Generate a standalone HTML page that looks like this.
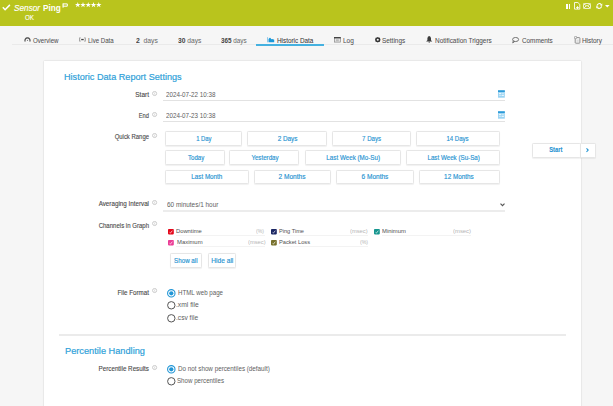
<!DOCTYPE html>
<html><head><meta charset="utf-8"><style>
*{box-sizing:border-box;margin:0;padding:0}
html,body{width:613px;height:406px;overflow:hidden;background:#f6f6f6;font-family:"Liberation Sans",sans-serif}
.a{position:absolute;white-space:nowrap;line-height:1}
#hdr{position:absolute;left:0;top:0;width:613px;height:26px;background:#b9c41d}
.tab{color:#505050;-webkit-text-stroke:0.05px #505050}
.tab b{-webkit-text-stroke:0;color:#444}
.dy{color:#666;-webkit-text-stroke:0}
#tabline{position:absolute;left:12px;top:44px;width:601px;height:1px;background:#eaeaea}
#tabul{position:absolute;left:256px;top:44px;width:68px;height:2px;background:#45b1e0}
#panel{position:absolute;left:44px;top:61px;width:537px;height:360px;background:#fff;box-shadow:0 0 1.5px rgba(0,0,0,.2)}
.h{color:#2e9fd9;-webkit-text-stroke:0.2px #2e9fd9}
.lbl{color:#4a4a4a;-webkit-text-stroke:0.12px #4a4a4a}
.val{color:#5e5e5e}
.ul{position:absolute;height:1px;background:#e2e2e2}
.btn{position:absolute;background:#fff;border:1px solid #e6e6e6;border-radius:1.5px;box-shadow:0 0.5px 1px rgba(0,0,0,.06)}
.bt{color:#1f93d2;-webkit-text-stroke:0.15px #1f93d2;white-space:nowrap;line-height:1}
.ch{color:#505050}
.unit{color:#b4b4b4}
</style></head><body>
<div id="hdr"></div>
<svg class="a" style="left:2.1px;top:3.5px" width="9" height="7" viewBox="0 0 9 7"><path d="M0.8 3.3 L3.1 5.7 L7.9 0.9" fill="none" stroke="#fff" stroke-width="1.5"/></svg>
<div id="t_sensor" class="a " style="left:14.15px;top:3.15px;font-size:9.6px;transform:scaleX(0.8579);transform-origin:0 0;font-style:italic;color:#fff;-webkit-text-stroke:0.15px #fff">Sensor</div>
<div id="t_ping" class="a " style="left:42.84px;top:3.65px;font-size:9.0px;transform:scaleX(0.9089);transform-origin:0 0;font-weight:bold;color:#fff">Ping</div>
<svg class="a" style="left:62.3px;top:2.6px" width="7" height="6" viewBox="0 0 7 6"><rect x="0.5" y="0.4" width="1.2" height="4.2" fill="#fff"/><path d="M1.2 0.9 H5.3 V3.2 H1.2" fill="none" stroke="#fff" stroke-width="1"/></svg>
<svg class="a" style="left:74.6px;top:2px" width="27" height="6" viewBox="0 0 27 6"><path transform="translate(0.0,0)" d="M2.75 0 L3.4 2 L5.5 2 L3.85 3.2 L4.5 5.2 L2.75 3.95 L1 5.2 L1.65 3.2 L0 2 L2.1 2 Z" fill="#fff"/><path transform="translate(5.25,0)" d="M2.75 0 L3.4 2 L5.5 2 L3.85 3.2 L4.5 5.2 L2.75 3.95 L1 5.2 L1.65 3.2 L0 2 L2.1 2 Z" fill="#fff"/><path transform="translate(10.5,0)" d="M2.75 0 L3.4 2 L5.5 2 L3.85 3.2 L4.5 5.2 L2.75 3.95 L1 5.2 L1.65 3.2 L0 2 L2.1 2 Z" fill="#fff"/><path transform="translate(15.75,0)" d="M2.75 0 L3.4 2 L5.5 2 L3.85 3.2 L4.5 5.2 L2.75 3.95 L1 5.2 L1.65 3.2 L0 2 L2.1 2 Z" fill="#fff"/><path transform="translate(21.0,0)" d="M2.75 0 L3.4 2 L5.5 2 L3.85 3.2 L4.5 5.2 L2.75 3.95 L1 5.2 L1.65 3.2 L0 2 L2.1 2 Z" fill="#fff"/></svg>
<div id="t_ok" class="a " style="left:24.63px;top:15.20px;font-size:6.7px;transform:scaleX(0.9289);transform-origin:0 0;color:#fff;-webkit-text-stroke:0.1px #fff">OK</div>
<div class="a" style="left:566.2px;top:3.9px;width:1.4px;height:4.7px;background:#fff"></div>
<div class="a" style="left:568.8px;top:3.9px;width:1.4px;height:4.7px;background:#fff"></div>
<svg class="a" style="left:573.8px;top:2.4px" width="7" height="8" viewBox="0 0 7 8"><path d="M0.5 0.5 H3.9 L5.8 2.4 V7.1 H0.5 Z" fill="none" stroke="#fff" stroke-width="0.85"/><path d="M3.5 4.3 V6.9 M2.2 5.6 H4.8" stroke="#fff" stroke-width="1"/></svg>
<svg class="a" style="left:583.2px;top:3.4px" width="8" height="6" viewBox="0 0 8 6"><rect x="0.45" y="0.45" width="7.1" height="5.1" rx="0.9" fill="none" stroke="#fff" stroke-width="0.8"/><path d="M0.7 0.9 L4 3.1 L7.3 0.9 M0.7 5.1 L3 3.2 M7.3 5.1 L5 3.2" fill="none" stroke="#fff" stroke-width="0.85"/></svg>
<svg class="a" style="left:595.9px;top:3px" width="7" height="6" viewBox="0 0 7 6"><path d="M1.0 2.7 A2.3 2.3 0 0 1 5.2 1.6 M5.5 3.3 A2.3 2.3 0 0 1 1.3 4.4" fill="none" stroke="#fff" stroke-width="1.1"/><path d="M6.3 0.6 L6.2 2.9 L4.0 2.2 Z M0.2 5.4 L0.3 3.1 L2.5 3.8 Z" fill="#fff"/></svg>
<svg class="a" style="left:604.8px;top:5px" width="5" height="3" viewBox="0 0 5 3"><path d="M0 0 H4.6 L2.3 2.4 Z" fill="#fff"/></svg>
<div id="tabline"></div><div id="tabul"></div>
<div id="tb_ov" class="a tab" style="left:32.85px;top:37.90px;font-size:6.8px;transform:scaleX(0.9021);transform-origin:0 0;">Overview</div>
<div id="tb_ld" class="a tab" style="left:87.95px;top:37.90px;font-size:6.8px;transform:scaleX(0.8927);transform-origin:0 0;">Live Data</div>
<div id="tb_2" class="a tab" style="left:136.27px;top:37.90px;font-size:6.8px;transform:scaleX(0.9966);transform-origin:0 0;"><b>2</b>&nbsp;&nbsp;<span class="dy">days</span></div>
<div id="tb_30" class="a tab" style="left:177.78px;top:37.90px;font-size:6.8px;transform:scaleX(0.9803);transform-origin:0 0;"><b>30</b> <span class="dy">days</span></div>
<div id="tb_365" class="a tab" style="left:221.16px;top:37.90px;font-size:6.8px;transform:scaleX(0.9312);transform-origin:0 0;"><b>365</b> <span class="dy">days</span></div>
<div id="tb_hd" class="a tab" style="left:277.45px;top:37.90px;font-size:6.8px;transform:scaleX(0.9339);transform-origin:0 0;color:#383838;-webkit-text-stroke:0.05px #383838">Historic Data</div>
<div id="tb_log" class="a tab" style="left:343.28px;top:37.90px;font-size:6.8px;transform:scaleX(0.9552);transform-origin:0 0;">Log</div>
<div id="tb_set" class="a tab" style="left:382.18px;top:37.90px;font-size:6.8px;transform:scaleX(0.9433);transform-origin:0 0;">Settings</div>
<div id="tb_nt" class="a tab" style="left:435.48px;top:37.90px;font-size:6.8px;transform:scaleX(0.9452);transform-origin:0 0;">Notification Triggers</div>
<div id="tb_com" class="a tab" style="left:522.25px;top:37.90px;font-size:6.8px;transform:scaleX(0.9322);transform-origin:0 0;">Comments</div>
<div id="tb_his" class="a tab" style="left:582.40px;top:37.90px;font-size:6.8px;transform:scaleX(0.9415);transform-origin:0 0;">History</div>
<svg class="a" style="left:23.5px;top:36.8px" width="7" height="6" viewBox="0 0 7 6"><path d="M1.3 4.6 A2.5 2.5 0 1 1 5.7 4.6" fill="none" stroke="#444" stroke-width="1.1"/><circle cx="3.5" cy="3.4" r="0.6" fill="#888"/></svg>
<svg class="a" style="left:78.5px;top:36.8px" width="7" height="6" viewBox="0 0 7 6"><path d="M1 0.3 Q0.1 2.5 1 4.7 M5.9 0.3 Q6.8 2.5 5.9 4.7" fill="none" stroke="#888" stroke-width="1"/><rect x="2.2" y="1.9" width="2.5" height="1.3" fill="#444"/></svg>
<svg class="a" style="left:266.8px;top:36.6px" width="8" height="6" viewBox="0 0 8 6"><path d="M0.55 0.2 V5.3" fill="none" stroke="#5ab0e4" stroke-width="0.7"/><path d="M1.5 5.3 V2.2 Q2.2 0.5 3.1 0.7 Q3.8 0.9 4.2 2.2 Q5.6 1.8 7.2 2.8 V5.3 Z" fill="#1b98d9"/></svg>
<svg class="a" style="left:334.2px;top:36.6px" width="7" height="6" viewBox="0 0 7 6"><rect x="0.35" y="0.5" width="6" height="4.6" fill="#e4e4e4" stroke="#888" stroke-width="0.7"/><rect x="0" y="0.1" width="6.7" height="1.3" fill="#3a3a3a"/><rect x="2" y="2.3" width="2.8" height="2" fill="#bbb"/></svg>
<svg class="a" style="left:374.6px;top:36.5px" width="6" height="6" viewBox="0 0 6 6"><path d="M2.75 0 L3.6 0.6 L4.9 0.8 L5.2 2 L5.5 2.75 L5.2 3.5 L4.9 4.7 L3.6 4.9 L2.75 5.5 L1.9 4.9 L0.6 4.7 L0.3 3.5 L0 2.75 L0.3 2 L0.6 0.8 L1.9 0.6 Z" fill="#333"/><circle cx="2.75" cy="2.75" r="1.05" fill="#f6f6f6"/></svg>
<svg class="a" style="left:426.3px;top:36px" width="7" height="7" viewBox="0 0 7 7"><path d="M3.2 0 Q4.8 0.3 5 2.2 V4.2 L6.3 5.6 H0.1 L1.4 4.2 V2.2 Q1.6 0.3 3.2 0 Z" fill="#3a3a3a"/><circle cx="3.2" cy="6.1" r="0.7" fill="#3a3a3a"/></svg>
<svg class="a" style="left:512.4px;top:36.6px" width="8" height="7" viewBox="0 0 8 7"><ellipse cx="3.6" cy="2.5" rx="3" ry="2.05" fill="none" stroke="#555" stroke-width="0.8"/><path d="M1.3 3.9 L0.7 5.9 L2.7 4.5" fill="none" stroke="#555" stroke-width="0.8"/></svg>
<svg class="a" style="left:573.6px;top:35.6px" width="7" height="8" viewBox="0 0 7 8"><rect x="1.2" y="1.6" width="4.7" height="5.6" rx="0.6" fill="#f4f4f4" stroke="#777" stroke-width="0.8"/><circle cx="1.6" cy="1.5" r="1.2" fill="#f4f4f4" stroke="#888" stroke-width="0.7"/><rect x="2.5" y="3.6" width="2.2" height="2.2" fill="#ddd"/></svg>
<div id="panel"></div>
<div id="h1" class="a h" style="left:64.21px;top:71.70px;font-size:9.9px;transform:scaleX(0.9240);transform-origin:0 0;">Historic Data Report Settings</div>
<div id="l_start" class="a lbl" style="left:29.08px;top:92.25px;font-size:6.7px;width:120px;text-align:right;transform:scaleX(0.9707);transform-origin:100% 0;">Start</div>
<svg class="a" style="left:151.9px;top:91.1px" width="6" height="6" viewBox="0 0 6 6"><circle cx="2.6" cy="2.5" r="2.05" fill="none" stroke="#c8c8c8" stroke-width="0.95"/><path d="M2.6 1.5 V3.6" stroke="#d4d4d4" stroke-width="0.8"/></svg>
<div id="v_d1" class="a val" style="left:166.22px;top:92.05px;font-size:6.7px;transform:scaleX(0.9347);transform-origin:0 0;">2024-07-22 10:38</div>
<div class="ul" style="left:163px;top:100px;width:342px"></div>
<svg class="a" style="left:498px;top:90.4px" width="7" height="8" viewBox="0 0 7 8"><rect x="0" y="0.3" width="6.8" height="7.4" fill="#9ad3f2"/><rect x="0" y="0.3" width="6.8" height="1.7" fill="#2b9ad8"/><rect x="0.9" y="2.9" width="2.2" height="1.2" fill="#e8f6fd"/><rect x="3.6" y="2.9" width="2.3" height="1.2" fill="#c8e8f8"/><rect x="0.9" y="4.8" width="2.2" height="1.2" fill="#c8e8f8"/><rect x="3.6" y="4.8" width="2.3" height="1.2" fill="#e8f6fd"/></svg>
<div id="l_end" class="a lbl" style="left:29.04px;top:113.05px;font-size:6.7px;width:120px;text-align:right;transform:scaleX(0.8590);transform-origin:100% 0;">End</div>
<svg class="a" style="left:151.9px;top:112.1px" width="6" height="6" viewBox="0 0 6 6"><circle cx="2.6" cy="2.5" r="2.05" fill="none" stroke="#c8c8c8" stroke-width="0.95"/><path d="M2.6 1.5 V3.6" stroke="#d4d4d4" stroke-width="0.8"/></svg>
<div id="v_d2" class="a val" style="left:166.22px;top:112.85px;font-size:6.7px;transform:scaleX(0.9347);transform-origin:0 0;">2024-07-23 10:38</div>
<div class="ul" style="left:163px;top:121px;width:342px"></div>
<svg class="a" style="left:498px;top:111.1px" width="7" height="8" viewBox="0 0 7 8"><rect x="0" y="0.3" width="6.8" height="7.4" fill="#9ad3f2"/><rect x="0" y="0.3" width="6.8" height="1.7" fill="#2b9ad8"/><rect x="0.9" y="2.9" width="2.2" height="1.2" fill="#e8f6fd"/><rect x="3.6" y="2.9" width="2.3" height="1.2" fill="#c8e8f8"/><rect x="0.9" y="4.8" width="2.2" height="1.2" fill="#c8e8f8"/><rect x="3.6" y="4.8" width="2.3" height="1.2" fill="#e8f6fd"/></svg>
<div id="l_qr" class="a lbl" style="left:29.12px;top:134.15px;font-size:6.7px;width:120px;text-align:right;transform:scaleX(0.8888);transform-origin:100% 0;">Quick Range</div>
<svg class="a" style="left:151.9px;top:132.7px" width="6" height="6" viewBox="0 0 6 6"><circle cx="2.6" cy="2.5" r="2.05" fill="none" stroke="#c8c8c8" stroke-width="0.95"/><path d="M2.6 1.5 V3.6" stroke="#d4d4d4" stroke-width="0.8"/></svg>
<div class="btn" style="left:165.4px;top:131px;width:77.0px;height:15px"></div><div class="a bt" style="left:164.98px;top:132.05px;width:77.0px;height:14.7px;display:flex;align-items:center;justify-content:center"><span id="b_1d" style="display:inline-block;font-size:6.8px;transform:scaleX(0.8653);transform-origin:50% 50%;">1 Day</span></div>
<div class="btn" style="left:247px;top:131px;width:80.0px;height:15px"></div><div class="a bt" style="left:247.46px;top:132.05px;width:80.0px;height:14.7px;display:flex;align-items:center;justify-content:center"><span id="b_2d" style="display:inline-block;font-size:6.8px;transform:scaleX(0.9349);transform-origin:50% 50%;">2 Days</span></div>
<div class="btn" style="left:331.9px;top:131px;width:79.5px;height:15px"></div><div class="a bt" style="left:331.72px;top:132.05px;width:79.5px;height:14.7px;display:flex;align-items:center;justify-content:center"><span id="b_7d" style="display:inline-block;font-size:6.8px;transform:scaleX(0.8965);transform-origin:50% 50%;">7 Days</span></div>
<div class="btn" style="left:416.3px;top:131px;width:83.7px;height:15px"></div><div class="a bt" style="left:415.88px;top:132.05px;width:83.7px;height:14.7px;display:flex;align-items:center;justify-content:center"><span id="b_14d" style="display:inline-block;font-size:6.8px;transform:scaleX(0.8880);transform-origin:50% 50%;">14 Days</span></div>
<div class="btn" style="left:165.4px;top:150px;width:59.4px;height:15px"></div><div class="a bt" style="left:166.21px;top:151.00px;width:59.4px;height:14.7px;display:flex;align-items:center;justify-content:center"><span id="b_today" style="display:inline-block;font-size:6.8px;transform:scaleX(0.8942);transform-origin:50% 50%;">Today</span></div>
<div class="btn" style="left:229.3px;top:150px;width:70.2px;height:15px"></div><div class="a bt" style="left:229.79px;top:151.00px;width:70.2px;height:14.7px;display:flex;align-items:center;justify-content:center"><span id="b_yest" style="display:inline-block;font-size:6.8px;transform:scaleX(0.9071);transform-origin:50% 50%;">Yesterday</span></div>
<div class="btn" style="left:305px;top:150px;width:95.7px;height:15px"></div><div class="a bt" style="left:304.89px;top:151.00px;width:95.7px;height:14.7px;display:flex;align-items:center;justify-content:center"><span id="b_lwm" style="display:inline-block;font-size:6.8px;transform:scaleX(0.9190);transform-origin:50% 50%;">Last Week (Mo-Su)</span></div>
<div class="btn" style="left:405.7px;top:150px;width:94.3px;height:15px"></div><div class="a bt" style="left:406.05px;top:151.00px;width:94.3px;height:14.7px;display:flex;align-items:center;justify-content:center"><span id="b_lws" style="display:inline-block;font-size:6.8px;transform:scaleX(0.9153);transform-origin:50% 50%;">Last Week (Su-Sa)</span></div>
<div class="btn" style="left:165.4px;top:170px;width:83.5px;height:14px"></div><div class="a bt" style="left:165.40px;top:170.10px;width:83.5px;height:14.7px;display:flex;align-items:center;justify-content:center"><span id="b_lm" style="display:inline-block;font-size:6.8px;transform:scaleX(0.9200);transform-origin:50% 50%;">Last Month</span></div>
<div class="btn" style="left:253.8px;top:170px;width:77.6px;height:14px"></div><div class="a bt" style="left:253.49px;top:170.10px;width:77.6px;height:14.7px;display:flex;align-items:center;justify-content:center"><span id="b_2m" style="display:inline-block;font-size:6.8px;transform:scaleX(0.9670);transform-origin:50% 50%;">2 Months</span></div>
<div class="btn" style="left:336.3px;top:170px;width:77.5px;height:14px"></div><div class="a bt" style="left:335.84px;top:170.10px;width:77.5px;height:14.7px;display:flex;align-items:center;justify-content:center"><span id="b_6m" style="display:inline-block;font-size:6.8px;transform:scaleX(0.9587);transform-origin:50% 50%;">6 Months</span></div>
<div class="btn" style="left:418.8px;top:170px;width:81.2px;height:14px"></div><div class="a bt" style="left:418.49px;top:170.10px;width:81.2px;height:14.7px;display:flex;align-items:center;justify-content:center"><span id="b_12m" style="display:inline-block;font-size:6.8px;transform:scaleX(0.9292);transform-origin:50% 50%;">12 Months</span></div>
<div class="btn" style="left:532.2px;top:143px;width:48.5px;height:15px"></div><div class="a bt" style="left:531.89px;top:142.60px;width:48.5px;height:14.9px;display:flex;align-items:center;justify-content:center"><span id="b_start" style="display:inline-block;font-size:6.8px;transform:scaleX(0.8463);transform-origin:50% 50%;font-weight:bold;-webkit-text-stroke:0.1px #1f93d2">Start</span></div>
<div class="btn" style="left:580px;top:143px;width:15.5px;height:15px"></div>
<svg class="a" style="left:585.6px;top:148px" width="3" height="5" viewBox="0 0 3 5"><path d="M0.5 0.4 L2.2 2.1 L0.5 3.8" fill="none" stroke="#1f93d2" stroke-width="1.05"/></svg>
<div id="l_avg" class="a lbl" style="left:28.94px;top:201.05px;font-size:6.7px;width:120px;text-align:right;transform:scaleX(0.9360);transform-origin:100% 0;">Averaging Interval</div>
<svg class="a" style="left:151.9px;top:200.2px" width="6" height="6" viewBox="0 0 6 6"><circle cx="2.6" cy="2.5" r="2.05" fill="none" stroke="#c8c8c8" stroke-width="0.95"/><path d="M2.6 1.5 V3.6" stroke="#d4d4d4" stroke-width="0.8"/></svg>
<div id="v_avg" class="a val" style="left:166.76px;top:202.05px;font-size:6.7px;transform:scaleX(0.9599);transform-origin:0 0;">60 minutes/1 hour</div>
<div class="ul" style="left:163px;top:210px;width:342px;height:2px;background:#ececec"></div>
<svg class="a" style="left:500px;top:202.5px" width="5" height="4" viewBox="0 0 5 4"><path d="M0.5 0.6 L2.5 2.6 L4.5 0.6" fill="none" stroke="#555" stroke-width="1.15"/></svg>
<div id="l_ch" class="a lbl" style="left:29.01px;top:223.05px;font-size:6.7px;width:120px;text-align:right;transform:scaleX(0.9032);transform-origin:100% 0;">Channels in Graph</div>
<svg class="a" style="left:151.9px;top:221.3px" width="6" height="6" viewBox="0 0 6 6"><circle cx="2.6" cy="2.5" r="2.05" fill="none" stroke="#c8c8c8" stroke-width="0.95"/><path d="M2.6 1.5 V3.6" stroke="#d4d4d4" stroke-width="0.8"/></svg>
<svg class="a" style="left:168.3px;top:228.6px" width="6" height="6" viewBox="0 0 6 6"><rect x="0" y="0" width="5.8" height="5.4" rx="0.8" fill="#e4071b"/><path d="M1.6 3.4 L2.4 4.1 L4.3 1.7" fill="none" stroke="#fff" stroke-width="0.8" opacity="0.85"/></svg>
<div id="c_00" class="a ch" style="left:176.43px;top:228.10px;font-size:6.1px;transform:scaleX(0.9512);transform-origin:0 0;">Downtime</div>
<div id="u_00" class="a unit" style="left:256.45px;top:228.10px;font-size:6.1px;transform:scaleX(0.8241);transform-origin:0 0;">(%)</div>
<div class="ul" style="left:175.7px;top:235px;width:89.5px;background:#f3f3f3"></div>
<svg class="a" style="left:271.2px;top:228.6px" width="6" height="6" viewBox="0 0 6 6"><rect x="0" y="0" width="5.8" height="5.4" rx="0.8" fill="#1b2663"/><path d="M1.6 3.4 L2.4 4.1 L4.3 1.7" fill="none" stroke="#fff" stroke-width="0.8" opacity="0.85"/></svg>
<div id="c_01" class="a ch" style="left:278.73px;top:228.10px;font-size:6.1px;transform:scaleX(0.9198);transform-origin:0 0;">Ping Time</div>
<div id="u_01" class="a unit" style="left:350.13px;top:228.10px;font-size:6.1px;transform:scaleX(0.9459);transform-origin:0 0;">(msec)</div>
<div class="ul" style="left:278.6px;top:235px;width:89.5px;background:#f3f3f3"></div>
<svg class="a" style="left:374.2px;top:228.6px" width="6" height="6" viewBox="0 0 6 6"><rect x="0" y="0" width="5.8" height="5.4" rx="0.8" fill="#16968f"/><path d="M1.6 3.4 L2.4 4.1 L4.3 1.7" fill="none" stroke="#fff" stroke-width="0.8" opacity="0.85"/></svg>
<div id="c_02" class="a ch" style="left:382.19px;top:228.10px;font-size:6.1px;transform:scaleX(0.9627);transform-origin:0 0;">Minimum</div>
<div id="u_02" class="a unit" style="left:453.35px;top:228.10px;font-size:6.1px;transform:scaleX(0.9685);transform-origin:0 0;">(msec)</div>
<div class="ul" style="left:381.6px;top:235px;width:89.5px;background:#f3f3f3"></div>
<svg class="a" style="left:168.3px;top:240.2px" width="6" height="6" viewBox="0 0 6 6"><rect x="0" y="0" width="5.8" height="5.4" rx="0.8" fill="#ea3d96"/><path d="M1.6 3.4 L2.4 4.1 L4.3 1.7" fill="none" stroke="#fff" stroke-width="0.8" opacity="0.85"/></svg>
<div id="c_10" class="a ch" style="left:176.60px;top:238.80px;font-size:6.1px;transform:scaleX(0.9672);transform-origin:0 0;">Maximum</div>
<div id="u_10" class="a unit" style="left:247.78px;top:238.80px;font-size:6.1px;transform:scaleX(0.9432);transform-origin:0 0;">(msec)</div>
<div class="ul" style="left:175.7px;top:246px;width:89.5px;background:#f3f3f3"></div>
<svg class="a" style="left:271.2px;top:240.2px" width="6" height="6" viewBox="0 0 6 6"><rect x="0" y="0" width="5.8" height="5.4" rx="0.8" fill="#77702b"/><path d="M1.6 3.4 L2.4 4.1 L4.3 1.7" fill="none" stroke="#fff" stroke-width="0.8" opacity="0.85"/></svg>
<div id="c_11" class="a ch" style="left:278.98px;top:238.80px;font-size:6.1px;transform:scaleX(0.9361);transform-origin:0 0;">Packet Loss</div>
<div id="u_11" class="a unit" style="left:359.50px;top:238.80px;font-size:6.1px;transform:scaleX(0.8556);transform-origin:0 0;">(%)</div>
<div class="ul" style="left:278.6px;top:246px;width:89.5px;background:#f3f3f3"></div>
<div class="btn" style="left:170.2px;top:253px;width:31.4px;height:15px"></div><div class="a bt" style="left:170.24px;top:253.90px;width:31.4px;height:14.4px;display:flex;align-items:center;justify-content:center"><span id="b_show" style="display:inline-block;font-size:6.8px;transform:scaleX(0.9129);transform-origin:50% 50%;">Show all</span></div>
<div class="btn" style="left:208.1px;top:253px;width:28.4px;height:15px"></div><div class="a bt" style="left:208.56px;top:253.90px;width:28.4px;height:14.4px;display:flex;align-items:center;justify-content:center"><span id="b_hide" style="display:inline-block;font-size:6.8px;transform:scaleX(0.9684);transform-origin:50% 50%;">Hide all</span></div>
<div id="l_ff" class="a lbl" style="left:29.18px;top:290.25px;font-size:6.7px;width:120px;text-align:right;transform:scaleX(0.9304);transform-origin:100% 0;">File Format</div>
<svg class="a" style="left:151.9px;top:288.3px" width="6" height="6" viewBox="0 0 6 6"><circle cx="2.6" cy="2.5" r="2.05" fill="none" stroke="#c8c8c8" stroke-width="0.95"/><path d="M2.6 1.5 V3.6" stroke="#d4d4d4" stroke-width="0.8"/></svg>
<svg class="a" style="left:166.8px;top:288.7px" width="9" height="9" viewBox="0 0 9 9"><circle cx="4.3" cy="4.3" r="3.7" fill="#fff" stroke="#2196d6" stroke-width="1.1"/><circle cx="4.3" cy="4.3" r="2.1" fill="#2196d6"/></svg>
<div id="v_html" class="a val" style="left:177.51px;top:290.05px;font-size:6.7px;transform:scaleX(0.9215);transform-origin:0 0;">HTML web page</div>
<svg class="a" style="left:166.8px;top:301.4px" width="9" height="9" viewBox="0 0 9 9"><circle cx="4.3" cy="4.3" r="3.7" fill="#fff" stroke="#555" stroke-width="1"/></svg>
<div id="v_xml" class="a val" style="left:175.50px;top:302.35px;font-size:6.7px;transform:scaleX(1.0065);transform-origin:0 0;">.xml file</div>
<svg class="a" style="left:166.8px;top:314.1px" width="9" height="9" viewBox="0 0 9 9"><circle cx="4.3" cy="4.3" r="3.7" fill="#fff" stroke="#555" stroke-width="1"/></svg>
<div id="v_csv" class="a val" style="left:176.03px;top:315.05px;font-size:6.7px;transform:scaleX(0.9910);transform-origin:0 0;">.csv file</div>
<div class="ul" style="left:58.6px;top:334px;width:507.4px;height:1.5px;background:#ebebeb"></div>
<div id="h2" class="a h" style="left:64.63px;top:345.55px;font-size:9.9px;transform:scaleX(0.9338);transform-origin:0 0;">Percentile Handling</div>
<div id="l_pr" class="a lbl" style="left:28.94px;top:366.35px;font-size:6.7px;width:120px;text-align:right;transform:scaleX(0.9364);transform-origin:100% 0;">Percentile Results</div>
<svg class="a" style="left:151.9px;top:365.2px" width="6" height="6" viewBox="0 0 6 6"><circle cx="2.6" cy="2.5" r="2.05" fill="none" stroke="#c8c8c8" stroke-width="0.95"/><path d="M2.6 1.5 V3.6" stroke="#d4d4d4" stroke-width="0.8"/></svg>
<svg class="a" style="left:166.6px;top:365.3px" width="9" height="9" viewBox="0 0 9 9"><circle cx="4.3" cy="4.3" r="3.7" fill="#fff" stroke="#2196d6" stroke-width="1.1"/><circle cx="4.3" cy="4.3" r="2.1" fill="#2196d6"/></svg>
<div id="v_dn" class="a val" style="left:177.76px;top:366.15px;font-size:6.7px;transform:scaleX(0.9390);transform-origin:0 0;">Do not show percentiles (default)</div>
<svg class="a" style="left:166.6px;top:377.4px" width="9" height="9" viewBox="0 0 9 9"><circle cx="4.3" cy="4.3" r="3.7" fill="#fff" stroke="#555" stroke-width="1"/></svg>
<div id="v_sp" class="a val" style="left:176.98px;top:378.35px;font-size:6.7px;transform:scaleX(0.9228);transform-origin:0 0;">Show percentiles</div>
</body></html>
